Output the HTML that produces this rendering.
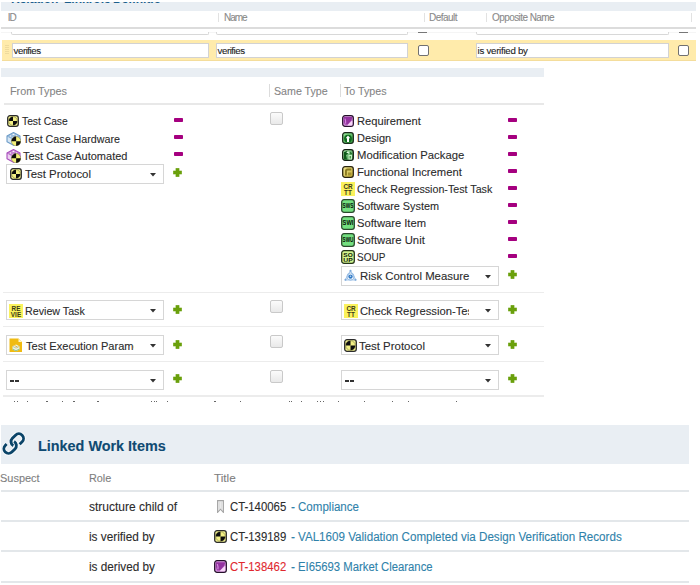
<!DOCTYPE html>
<html><head><meta charset="utf-8"><style>
html,body{margin:0;padding:0;}
body{width:700px;height:585px;overflow:hidden;position:relative;background:#fff;font-family:"Liberation Sans",sans-serif;}
.t{position:absolute;white-space:nowrap;-webkit-text-stroke:0.1px currentColor;}
svg{display:block;}
</style></head><body>
<div style="position:absolute;left:1px;top:2px;width:695px;height:9px;background:#e9eef3"></div>
<div style="position:absolute;left:0;top:1.5px;width:700px;height:1.9px;overflow:hidden">
<div class="t" style="left:11px;top:-8.1px;font-size:12px;line-height:12px;font-weight:bold;color:#1a5e8c">Relation</div>
<div class="t" style="left:64px;top:-8.1px;font-size:12px;line-height:12px;font-weight:bold;color:#1a5e8c">Linkrole</div>
<div class="t" style="left:113px;top:-8.1px;font-size:12px;line-height:12px;font-weight:bold;color:#1a5e8c">Definitio</div>
</div>
<div class="t" style="left:7.8px;top:12.93px;font-size:10px;line-height:10px;color:#8a8a8a;font-weight:normal;letter-spacing:-1.200px;">ID</div>
<div class="t" style="left:224px;top:12.93px;font-size:10px;line-height:10px;color:#8a8a8a;font-weight:normal;letter-spacing:-1.025px;">Name</div>
<div class="t" style="left:429px;top:12.93px;font-size:10px;line-height:10px;color:#8a8a8a;font-weight:normal;letter-spacing:-0.531px;">Default</div>
<div class="t" style="left:492px;top:12.93px;font-size:10px;line-height:10px;color:#8a8a8a;font-weight:normal;letter-spacing:-0.573px;">Opposite Name</div>
<div style="position:absolute;left:218px;top:13px;width:1px;height:9px;background:#e2e2e2"></div>
<div style="position:absolute;left:424px;top:13px;width:1px;height:9px;background:#e2e2e2"></div>
<div style="position:absolute;left:486px;top:13px;width:1px;height:9px;background:#e2e2e2"></div>
<div style="position:absolute;left:691px;top:13px;width:1px;height:9px;background:#e2e2e2"></div>
<div style="position:absolute;left:1px;top:27px;width:695px;height:2px;background:#dcdcdc"></div>
<div style="position:absolute;left:1px;top:32px;width:695px;height:1px;background:#f5f5f5"></div>
<div style="position:absolute;left:11px;top:32px;width:198px;height:3.4px;box-sizing:border-box;border:1px solid #d8d8d8;border-top:none;border-radius:0 0 2px 2px;background:#fff"></div>
<div style="position:absolute;left:216px;top:32px;width:192px;height:3.4px;box-sizing:border-box;border:1px solid #d8d8d8;border-top:none;border-radius:0 0 2px 2px;background:#fff"></div>
<div style="position:absolute;left:476px;top:32px;width:193px;height:3.4px;box-sizing:border-box;border:1px solid #d8d8d8;border-top:none;border-radius:0 0 2px 2px;background:#fff"></div>
<div style="position:absolute;left:418px;top:32.2px;width:9px;height:1.2px;background:#777"></div>
<div style="position:absolute;left:679px;top:32.2px;width:9px;height:1.2px;background:#777"></div>
<div style="position:absolute;left:2px;top:39.5px;width:694px;height:21.5px;background:#ffebab;box-shadow:inset 0 -1px 0 #f4dd9c"></div>
<svg style="position:absolute;left:5px;top:45px" width="4" height="10" viewBox="0 0 4 10"><rect x="0.5" y="0" width="1" height="1" fill="#dcc98f"/><rect x="0.5" y="2" width="1" height="1" fill="#dcc98f"/><rect x="0.5" y="4" width="1" height="1" fill="#dcc98f"/><rect x="0.5" y="6" width="1" height="1" fill="#dcc98f"/><rect x="0.5" y="8" width="1" height="1" fill="#dcc98f"/><rect x="2.5" y="0" width="1" height="1" fill="#dcc98f"/><rect x="2.5" y="2" width="1" height="1" fill="#dcc98f"/><rect x="2.5" y="4" width="1" height="1" fill="#dcc98f"/><rect x="2.5" y="6" width="1" height="1" fill="#dcc98f"/><rect x="2.5" y="8" width="1" height="1" fill="#dcc98f"/></svg>
<div style="position:absolute;left:12px;top:43px;width:197px;height:15px;box-sizing:border-box;border:1px solid #d2d2d2;background:#fff"></div>
<div class="t" style="left:13.6px;top:46.19px;font-size:9.7px;line-height:9.7px;color:#222;font-weight:normal;letter-spacing:-0.469px;">verifies</div>
<div style="position:absolute;left:216px;top:43px;width:192px;height:15px;box-sizing:border-box;border:1px solid #d2d2d2;background:#fff"></div>
<div class="t" style="left:217.6px;top:46.19px;font-size:9.7px;line-height:9.7px;color:#222;font-weight:normal;letter-spacing:-0.469px;">verifies</div>
<div style="position:absolute;left:476px;top:43px;width:193px;height:15px;box-sizing:border-box;border:1px solid #d2d2d2;background:#fff"></div>
<div class="t" style="left:477.6px;top:46.19px;font-size:9.7px;line-height:9.7px;color:#222;font-weight:normal;letter-spacing:-0.272px;">is verified by</div>
<div style="position:absolute;left:417.5px;top:44.5px;width:11px;height:11px;box-sizing:border-box;border:1.3px solid #707070;border-radius:2px;background:#fff"></div>
<div style="position:absolute;left:678px;top:44.5px;width:11px;height:11px;box-sizing:border-box;border:1.3px solid #707070;border-radius:2px;background:#fff"></div>
<div style="position:absolute;left:1px;top:68px;width:543px;height:8.6px;background:#e9eef3"></div>
<div class="t" style="left:9.7px;top:85.18px;font-size:11.6px;line-height:11.6px;color:#858585;font-weight:normal;transform:scaleX(0.9346);transform-origin:0 0;">From Types</div>
<div class="t" style="left:273.5px;top:85.18px;font-size:11.6px;line-height:11.6px;color:#858585;font-weight:normal;transform:scaleX(0.9191);transform-origin:0 0;">Same Type</div>
<div class="t" style="left:344.3px;top:85.18px;font-size:11.6px;line-height:11.6px;color:#858585;font-weight:normal;transform:scaleX(0.9203);transform-origin:0 0;">To Types</div>
<div style="position:absolute;left:269px;top:84px;width:1px;height:13px;background:#dcdcdc"></div>
<div style="position:absolute;left:340px;top:84px;width:1px;height:13px;background:#dcdcdc"></div>
<div style="position:absolute;left:4px;top:103px;width:540px;height:1.5px;background:#e8e8e8"></div>
<svg style="position:absolute;left:7px;top:115px" width="12" height="12" viewBox="0 0 12 12"><rect x="0.7" y="0.7" width="10.6" height="10.6" rx="2.3" fill="#f1ef8c" stroke="#2c2c2c" stroke-width="1.3"/><circle cx="6.0" cy="6.0" r="4.3" fill="#f3f084"/><path d="M6.0 6.0 L1.7000000000000002 6.0 A4.3 4.3 0 0 1 6.0 1.7000000000000002 Z" fill="#0c0c0c"/><path d="M6.0 6.0 L10.3 6.0 A4.3 4.3 0 0 1 6.0 10.3 Z" fill="#0c0c0c"/><circle cx="6.0" cy="6.0" r="4.3" fill="none" stroke="#3a3a20" stroke-width="0.35"/></svg>
<div class="t" style="left:22.3px;top:115.48px;font-size:11.6px;line-height:11.6px;color:#2b2b2b;font-weight:normal;transform:scaleX(0.8865);transform-origin:0 0;">Test Case</div>
<svg style="position:absolute;left:5.6px;top:130.8px" width="15" height="15" viewBox="0 0 15 15"><path d="M1 5 L7.5 1.6 L14 5 V10.8 L7.5 14.2 L1 10.8 Z" fill="#d6e6f4" stroke="#6d9cc8" stroke-width="1.1" stroke-linejoin="round"/><path d="M1 5 L7.5 8.4 L14 5 M7.5 8.4 V14" fill="none" stroke="#6d9cc8" stroke-width="0.7"/><ellipse cx="7.5" cy="3.4" rx="1.6" ry="1.05" fill="#fff" stroke="#6d9cc8" stroke-width="0.8"/><ellipse cx="4.5" cy="5" rx="1.6" ry="1.05" fill="#fff" stroke="#6d9cc8" stroke-width="0.8"/><ellipse cx="10.5" cy="5" rx="1.6" ry="1.05" fill="#fff" stroke="#6d9cc8" stroke-width="0.8"/><ellipse cx="7.5" cy="6.6" rx="1.6" ry="1.05" fill="#fff" stroke="#6d9cc8" stroke-width="0.8"/><circle cx="10.1" cy="10.2" r="4.7" fill="#f3f07a"/><path d="M10.1 10.2 L5.3999999999999995 10.2 A4.7 4.7 0 0 1 10.1 5.499999999999999 Z" fill="#0c0c0c"/><path d="M10.1 10.2 L14.8 10.2 A4.7 4.7 0 0 1 10.1 14.899999999999999 Z" fill="#0c0c0c"/><circle cx="10.1" cy="10.2" r="4.7" fill="none" stroke="#3a3a20" stroke-width="0.35"/></svg>
<div class="t" style="left:22.7px;top:132.98px;font-size:11.6px;line-height:11.6px;color:#2b2b2b;font-weight:normal;transform:scaleX(0.9236);transform-origin:0 0;">Test Case Hardware</div>
<svg style="position:absolute;left:5.6px;top:147.6px" width="15" height="15" viewBox="0 0 15 15"><path d="M1 5 L7.5 1.6 L14 5 V10.8 L7.5 14.2 L1 10.8 Z" fill="#ecd2f0" stroke="#a84cbc" stroke-width="1.1" stroke-linejoin="round"/><path d="M1 5 L7.5 8.4 L14 5 M7.5 8.4 V14" fill="none" stroke="#a84cbc" stroke-width="0.7"/><ellipse cx="7.5" cy="3.4" rx="1.6" ry="1.05" fill="#fff" stroke="#a84cbc" stroke-width="0.8"/><ellipse cx="4.5" cy="5" rx="1.6" ry="1.05" fill="#fff" stroke="#a84cbc" stroke-width="0.8"/><ellipse cx="10.5" cy="5" rx="1.6" ry="1.05" fill="#fff" stroke="#a84cbc" stroke-width="0.8"/><ellipse cx="7.5" cy="6.6" rx="1.6" ry="1.05" fill="#fff" stroke="#a84cbc" stroke-width="0.8"/><circle cx="10.1" cy="10.2" r="4.7" fill="#f3f07a"/><path d="M10.1 10.2 L5.3999999999999995 10.2 A4.7 4.7 0 0 1 10.1 5.499999999999999 Z" fill="#0c0c0c"/><path d="M10.1 10.2 L14.8 10.2 A4.7 4.7 0 0 1 10.1 14.899999999999999 Z" fill="#0c0c0c"/><circle cx="10.1" cy="10.2" r="4.7" fill="none" stroke="#3a3a20" stroke-width="0.35"/></svg>
<div class="t" style="left:22.7px;top:149.88px;font-size:11.6px;line-height:11.6px;color:#2b2b2b;font-weight:normal;transform:scaleX(0.9473);transform-origin:0 0;">Test Case Automated</div>
<div style="position:absolute;left:173.5px;top:117.7px;width:9.2px;height:4px;background:#a5007f;border-radius:0.8px"></div>
<div style="position:absolute;left:173.5px;top:134.7px;width:9.2px;height:4px;background:#a5007f;border-radius:0.8px"></div>
<div style="position:absolute;left:173.5px;top:151.7px;width:9.2px;height:4px;background:#a5007f;border-radius:0.8px"></div>
<div style="position:absolute;left:6px;top:163.5px;width:158px;height:20px;box-sizing:border-box;border:1px solid #d6d6d6;background:#fff"></div>
<svg style="position:absolute;left:150px;top:172.5px" width="6" height="4" viewBox="0 0 6 4"><path d="M0 0 H6 L3 3.5 Z" fill="#333"/></svg>
<svg style="position:absolute;left:9.5px;top:168px" width="12" height="12" viewBox="0 0 12 12"><rect x="0.7" y="0.7" width="10.6" height="10.6" rx="2.3" fill="#f1ef8c" stroke="#2c2c2c" stroke-width="1.3"/><circle cx="6.0" cy="6.0" r="4.3" fill="#f3f084"/><path d="M6.0 6.0 L1.7000000000000002 6.0 A4.3 4.3 0 0 1 6.0 1.7000000000000002 Z" fill="#0c0c0c"/><path d="M6.0 6.0 L10.3 6.0 A4.3 4.3 0 0 1 6.0 10.3 Z" fill="#0c0c0c"/><circle cx="6.0" cy="6.0" r="4.3" fill="none" stroke="#3a3a20" stroke-width="0.35"/></svg>
<div class="t" style="left:25px;top:168.38px;font-size:11.6px;line-height:11.6px;color:#2b2b2b;font-weight:normal;transform:scaleX(0.9849);transform-origin:0 0;">Test Protocol</div>
<svg style="position:absolute;left:173.1px;top:167.6px" width="9" height="9" viewBox="0 0 9 9"><path d="M2.9 0.3 H6.1 V2.9 H8.7 V6.1 H6.1 V8.7 H2.9 V6.1 H0.3 V2.9 H2.9 Z" fill="#6aa00c" stroke="#6aa00c" stroke-width="0.5" stroke-linejoin="round"/></svg>
<div style="position:absolute;left:270px;top:112px;width:13px;height:13px;box-sizing:border-box;border:1px solid #c9c9c9;border-radius:2px;background:linear-gradient(#fbfbfb,#e9e9e9)"></div>
<svg style="position:absolute;left:342px;top:115.0px" width="12" height="12" viewBox="0 0 12 12"><rect x="0.7" y="0.7" width="10.6" height="10.6" rx="2.3" fill="#de9ce6" stroke="#24102a" stroke-width="1.3"/><g transform="scale(1.0)"><path d="M1.8 2 H10.4 L9.6 5.2 L5.6 9.8 L2.6 9.6 L1.8 6 Z" fill="#93339f"/><path d="M3 3.6 Q4 6 3.6 8.6" stroke="#d58ae0" stroke-width="1.1" fill="none"/><path d="M5.2 10.4 L10.4 5.4 L10.4 10.4 Z" fill="#f7d6f7"/></g></svg>
<div class="t" style="left:357px;top:115.48px;font-size:11.6px;line-height:11.6px;color:#2b2b2b;font-weight:normal;transform:scaleX(0.9612);transform-origin:0 0;">Requirement</div>
<div style="position:absolute;left:508px;top:117.5px;width:9.2px;height:4px;background:#a5007f;border-radius:0.8px"></div>
<svg style="position:absolute;left:342px;top:132.0px" width="12" height="12" viewBox="0 0 12 12"><defs><linearGradient id="g56" x1="0" y1="0" x2="1" y2="1"><stop offset="0" stop-color="#9ee8a0"/><stop offset="1" stop-color="#2e9a3a"/></linearGradient></defs><rect x="0.7" y="0.7" width="10.6" height="10.6" rx="2.3" fill="url(#g56)" stroke="#1a2a1a" stroke-width="1.3"/><circle cx="6" cy="6.6" r="3.9" fill="#0f6a1c"/><path d="M6 3.6 L3.7 6.2 H5 V10 H7 V6.2 H8.3 Z" fill="#fff"/></svg>
<div class="t" style="left:357px;top:132.48px;font-size:11.6px;line-height:11.6px;color:#2b2b2b;font-weight:normal;transform:scaleX(0.9477);transform-origin:0 0;">Design</div>
<div style="position:absolute;left:508px;top:134.5px;width:9.2px;height:4px;background:#a5007f;border-radius:0.8px"></div>
<svg style="position:absolute;left:342px;top:149.0px" width="12" height="12" viewBox="0 0 12 12"><defs><linearGradient id="g59" x1="0" y1="0" x2="1" y2="1"><stop offset="0" stop-color="#b8f0b8"/><stop offset="1" stop-color="#2f8a3a"/></linearGradient></defs><rect x="0.7" y="0.7" width="10.6" height="10.6" rx="2.3" fill="url(#g59)" stroke="#142014" stroke-width="1.3"/><path d="M2 10.5 L2 3 L5 2 L6 5 L4 6 L5 10.5 Z" fill="#0e5a1a"/><path d="M4 3.5 L6.5 2.5 L7 4.5 Z" fill="#e8ffe8"/><path d="M6.5 6 H10 V10.5 H6.5 Z" fill="#c8f0c8"/><path d="M7.5 7 H9 V9.5 H7.5 Z" fill="#4aa04a"/><path d="M8 2.5 L10 4.5 L8.5 5.5 Z" fill="#0e5a1a"/></svg>
<div class="t" style="left:357px;top:149.48px;font-size:11.6px;line-height:11.6px;color:#2b2b2b;font-weight:normal;transform:scaleX(0.9728);transform-origin:0 0;">Modification Package</div>
<div style="position:absolute;left:508px;top:151.5px;width:9.2px;height:4px;background:#a5007f;border-radius:0.8px"></div>
<svg style="position:absolute;left:342px;top:166.0px" width="12" height="12" viewBox="0 0 12 12"><defs><linearGradient id="g62" x1="0" y1="0" x2="1" y2="1"><stop offset="0" stop-color="#f4ea98"/><stop offset="1" stop-color="#c2ac30"/></linearGradient></defs><rect x="0.7" y="0.7" width="10.6" height="10.6" rx="2.3" fill="url(#g62)" stroke="#2a2410" stroke-width="1.3"/><path d="M3 9.5 V5 A2.5 2.5 0 0 1 5.5 2.5 H9.3 V4.5 H5.6 A0.8 0.8 0 0 0 4.9 5.3 V9.5 Z" fill="#8a7a20"/><path d="M6 6.5 H9.5 V9.5 H6 Z" fill="#a49230"/></svg>
<div class="t" style="left:357px;top:166.48px;font-size:11.6px;line-height:11.6px;color:#2b2b2b;font-weight:normal;transform:scaleX(0.9680);transform-origin:0 0;">Functional Increment</div>
<div style="position:absolute;left:508px;top:168.5px;width:9.2px;height:4px;background:#a5007f;border-radius:0.8px"></div>
<svg style="position:absolute;left:341px;top:182.2px" width="14" height="14" viewBox="0 0 14 14"><rect width="14" height="14" fill="#faf25c"/><text x="7.0" y="6.7" font-family="Liberation Sans" font-size="6.4" text-anchor="middle" fill="#3a3a18" font-weight="bold">CR</text><text x="7.0" y="13" font-family="Liberation Sans" font-size="6.4" text-anchor="middle" fill="#3a3a18" font-weight="bold">TT</text></svg>
<div class="t" style="left:357px;top:183.48px;font-size:11.6px;line-height:11.6px;color:#2b2b2b;font-weight:normal;transform:scaleX(0.9223);transform-origin:0 0;">Check Regression-Test Task</div>
<div style="position:absolute;left:508px;top:185.5px;width:9.2px;height:4px;background:#a5007f;border-radius:0.8px"></div>
<svg style="position:absolute;left:341px;top:199.4px" width="14" height="14" viewBox="0 0 14 14"><rect x="0.7" y="0.7" width="12.6" height="12.6" rx="2.3" fill="#74e080" stroke="#2a4a2c" stroke-width="1.3"/><text x="1.6" y="9.4" font-family="Liberation Sans" font-size="6.3" font-weight="bold" textLength="10.8" lengthAdjust="spacingAndGlyphs" fill="#061006">SWS</text></svg>
<div class="t" style="left:357px;top:200.48px;font-size:11.6px;line-height:11.6px;color:#2b2b2b;font-weight:normal;transform:scaleX(0.9358);transform-origin:0 0;">Software System</div>
<div style="position:absolute;left:508px;top:202.5px;width:9.2px;height:4px;background:#a5007f;border-radius:0.8px"></div>
<svg style="position:absolute;left:341px;top:216.4px" width="14" height="14" viewBox="0 0 14 14"><rect x="0.7" y="0.7" width="12.6" height="12.6" rx="2.3" fill="#74e080" stroke="#2a4a2c" stroke-width="1.3"/><text x="1.6" y="9.4" font-family="Liberation Sans" font-size="6.3" font-weight="bold" textLength="10.8" lengthAdjust="spacingAndGlyphs" fill="#061006">SWI</text></svg>
<div class="t" style="left:357px;top:217.48px;font-size:11.6px;line-height:11.6px;color:#2b2b2b;font-weight:normal;transform:scaleX(0.9647);transform-origin:0 0;">Software Item</div>
<div style="position:absolute;left:508px;top:219.5px;width:9.2px;height:4px;background:#a5007f;border-radius:0.8px"></div>
<svg style="position:absolute;left:341px;top:233.4px" width="14" height="14" viewBox="0 0 14 14"><rect x="0.7" y="0.7" width="12.6" height="12.6" rx="2.3" fill="#74e080" stroke="#2a4a2c" stroke-width="1.3"/><text x="1.6" y="9.4" font-family="Liberation Sans" font-size="6.3" font-weight="bold" textLength="10.8" lengthAdjust="spacingAndGlyphs" fill="#061006">SWU</text></svg>
<div class="t" style="left:357px;top:234.48px;font-size:11.6px;line-height:11.6px;color:#2b2b2b;font-weight:normal;transform:scaleX(0.9743);transform-origin:0 0;">Software Unit</div>
<div style="position:absolute;left:508px;top:236.5px;width:9.2px;height:4px;background:#a5007f;border-radius:0.8px"></div>
<svg style="position:absolute;left:341px;top:249.8px" width="14" height="14" viewBox="0 0 14 14"><rect x="0.7" y="0.7" width="12.6" height="12.6" rx="2.3" fill="#d2f48e" stroke="#26361a" stroke-width="1.3"/><text x="2.3" y="6.6" font-family="Liberation Sans" font-size="5.8" font-weight="bold" textLength="9.4" lengthAdjust="spacingAndGlyphs" fill="#101808">SO</text><text x="2.3" y="12" font-family="Liberation Sans" font-size="5.8" font-weight="bold" textLength="9.4" lengthAdjust="spacingAndGlyphs" fill="#101808">UP</text></svg>
<div class="t" style="left:357px;top:251.48px;font-size:11.6px;line-height:11.6px;color:#2b2b2b;font-weight:normal;transform:scaleX(0.8613);transform-origin:0 0;">SOUP</div>
<div style="position:absolute;left:508px;top:253.5px;width:9.2px;height:4px;background:#a5007f;border-radius:0.8px"></div>
<div style="position:absolute;left:341px;top:265.5px;width:158px;height:20px;box-sizing:border-box;border:1px solid #d6d6d6;background:#fff"></div>
<svg style="position:absolute;left:485px;top:274.5px" width="6" height="4" viewBox="0 0 6 4"><path d="M0 0 H6 L3 3.5 Z" fill="#333"/></svg>
<svg style="position:absolute;left:344px;top:269px" width="13" height="13" viewBox="0 0 13 13"><path d="M6.5 1.8 L11.8 11 H1.2 Z" fill="none" stroke="#a8c8ea" stroke-width="1.2" stroke-linejoin="round"/><circle cx="6.5" cy="7.6" r="3.6" fill="none" stroke="#9cc0e6" stroke-width="1"/><circle cx="6.5" cy="7.6" r="2.2" fill="#2f78c4"/><circle cx="6.5" cy="7.3" r="0.8" fill="#bcd8f4"/><circle cx="6.5" cy="1.8" r="1" fill="#7aa8d8"/><circle cx="1.5" cy="10.8" r="1" fill="#7aa8d8"/><circle cx="11.5" cy="10.8" r="1" fill="#7aa8d8"/></svg>
<div class="t" style="left:359.6px;top:269.78px;font-size:11.6px;line-height:11.6px;color:#2b2b2b;font-weight:normal;transform:scaleX(0.9815);transform-origin:0 0;">Risk Control Measure</div>
<svg style="position:absolute;left:507.6px;top:269.6px" width="9" height="9" viewBox="0 0 9 9"><path d="M2.9 0.3 H6.1 V2.9 H8.7 V6.1 H6.1 V8.7 H2.9 V6.1 H0.3 V2.9 H2.9 Z" fill="#6aa00c" stroke="#6aa00c" stroke-width="0.5" stroke-linejoin="round"/></svg>
<div style="position:absolute;left:3px;top:291.5px;width:541px;height:1.2px;background:#ececec"></div>
<div style="position:absolute;left:3px;top:326.3px;width:541px;height:1.2px;background:#ececec"></div>
<div style="position:absolute;left:3px;top:360.8px;width:541px;height:1.2px;background:#ececec"></div>
<div style="position:absolute;left:3px;top:395.4px;width:541px;height:1.2px;background:#ececec"></div>
<div style="position:absolute;left:6px;top:300.3px;width:158px;height:20px;box-sizing:border-box;border:1px solid #d6d6d6;background:#fff"></div>
<svg style="position:absolute;left:150px;top:309.3px" width="6" height="4" viewBox="0 0 6 4"><path d="M0 0 H6 L3 3.5 Z" fill="#333"/></svg>
<svg style="position:absolute;left:173.1px;top:304.90000000000003px" width="9" height="9" viewBox="0 0 9 9"><path d="M2.9 0.3 H6.1 V2.9 H8.7 V6.1 H6.1 V8.7 H2.9 V6.1 H0.3 V2.9 H2.9 Z" fill="#6aa00c" stroke="#6aa00c" stroke-width="0.5" stroke-linejoin="round"/></svg>
<div style="position:absolute;left:270px;top:300.3px;width:13px;height:13px;box-sizing:border-box;border:1px solid #c9c9c9;border-radius:2px;background:linear-gradient(#fbfbfb,#e9e9e9)"></div>
<div style="position:absolute;left:341px;top:300.3px;width:158px;height:20px;box-sizing:border-box;border:1px solid #d6d6d6;background:#fff"></div>
<svg style="position:absolute;left:485px;top:309.3px" width="6" height="4" viewBox="0 0 6 4"><path d="M0 0 H6 L3 3.5 Z" fill="#333"/></svg>
<svg style="position:absolute;left:507.6px;top:304.90000000000003px" width="9" height="9" viewBox="0 0 9 9"><path d="M2.9 0.3 H6.1 V2.9 H8.7 V6.1 H6.1 V8.7 H2.9 V6.1 H0.3 V2.9 H2.9 Z" fill="#6aa00c" stroke="#6aa00c" stroke-width="0.5" stroke-linejoin="round"/></svg>
<div style="position:absolute;left:6px;top:335px;width:158px;height:20px;box-sizing:border-box;border:1px solid #d6d6d6;background:#fff"></div>
<svg style="position:absolute;left:150px;top:344px" width="6" height="4" viewBox="0 0 6 4"><path d="M0 0 H6 L3 3.5 Z" fill="#333"/></svg>
<svg style="position:absolute;left:173.1px;top:339.6px" width="9" height="9" viewBox="0 0 9 9"><path d="M2.9 0.3 H6.1 V2.9 H8.7 V6.1 H6.1 V8.7 H2.9 V6.1 H0.3 V2.9 H2.9 Z" fill="#6aa00c" stroke="#6aa00c" stroke-width="0.5" stroke-linejoin="round"/></svg>
<div style="position:absolute;left:270px;top:335px;width:13px;height:13px;box-sizing:border-box;border:1px solid #c9c9c9;border-radius:2px;background:linear-gradient(#fbfbfb,#e9e9e9)"></div>
<div style="position:absolute;left:341px;top:335px;width:158px;height:20px;box-sizing:border-box;border:1px solid #d6d6d6;background:#fff"></div>
<svg style="position:absolute;left:485px;top:344px" width="6" height="4" viewBox="0 0 6 4"><path d="M0 0 H6 L3 3.5 Z" fill="#333"/></svg>
<svg style="position:absolute;left:507.6px;top:339.6px" width="9" height="9" viewBox="0 0 9 9"><path d="M2.9 0.3 H6.1 V2.9 H8.7 V6.1 H6.1 V8.7 H2.9 V6.1 H0.3 V2.9 H2.9 Z" fill="#6aa00c" stroke="#6aa00c" stroke-width="0.5" stroke-linejoin="round"/></svg>
<div style="position:absolute;left:6px;top:369.5px;width:158px;height:20px;box-sizing:border-box;border:1px solid #d6d6d6;background:#fff"></div>
<svg style="position:absolute;left:150px;top:378.5px" width="6" height="4" viewBox="0 0 6 4"><path d="M0 0 H6 L3 3.5 Z" fill="#333"/></svg>
<svg style="position:absolute;left:173.1px;top:374.1px" width="9" height="9" viewBox="0 0 9 9"><path d="M2.9 0.3 H6.1 V2.9 H8.7 V6.1 H6.1 V8.7 H2.9 V6.1 H0.3 V2.9 H2.9 Z" fill="#6aa00c" stroke="#6aa00c" stroke-width="0.5" stroke-linejoin="round"/></svg>
<div style="position:absolute;left:270px;top:369.5px;width:13px;height:13px;box-sizing:border-box;border:1px solid #c9c9c9;border-radius:2px;background:linear-gradient(#fbfbfb,#e9e9e9)"></div>
<div style="position:absolute;left:341px;top:369.5px;width:158px;height:20px;box-sizing:border-box;border:1px solid #d6d6d6;background:#fff"></div>
<svg style="position:absolute;left:485px;top:378.5px" width="6" height="4" viewBox="0 0 6 4"><path d="M0 0 H6 L3 3.5 Z" fill="#333"/></svg>
<svg style="position:absolute;left:507.6px;top:374.1px" width="9" height="9" viewBox="0 0 9 9"><path d="M2.9 0.3 H6.1 V2.9 H8.7 V6.1 H6.1 V8.7 H2.9 V6.1 H0.3 V2.9 H2.9 Z" fill="#6aa00c" stroke="#6aa00c" stroke-width="0.5" stroke-linejoin="round"/></svg>
<svg style="position:absolute;left:8.6px;top:303.8px" width="14" height="14" viewBox="0 0 14 14"><rect width="14" height="14" fill="#faf25c"/><text x="7.0" y="6.7" font-family="Liberation Sans" font-size="6.4" text-anchor="middle" fill="#3a3a18" font-weight="bold">RE</text><text x="7.0" y="13" font-family="Liberation Sans" font-size="6.4" text-anchor="middle" fill="#3a3a18" font-weight="bold">VIE</text></svg>
<div class="t" style="left:24.8px;top:305.18px;font-size:11.6px;line-height:11.6px;color:#2b2b2b;font-weight:normal;transform:scaleX(0.9220);transform-origin:0 0;">Review Task</div>
<svg style="position:absolute;left:343.6px;top:303.8px" width="14" height="14" viewBox="0 0 14 14"><rect width="14" height="14" fill="#faf25c"/><text x="7.0" y="6.7" font-family="Liberation Sans" font-size="6.4" text-anchor="middle" fill="#3a3a18" font-weight="bold">CR</text><text x="7.0" y="13" font-family="Liberation Sans" font-size="6.4" text-anchor="middle" fill="#3a3a18" font-weight="bold">TT</text></svg>
<div style="position:absolute;left:357px;top:300px;width:112px;height:20px;overflow:hidden">
<div class="t" style="left:2.5px;top:5.18px;font-size:11.6px;line-height:11.6px;color:#2b2b2b;font-weight:normal;transform:scaleX(0.9700);transform-origin:0 0;">Check Regression-Test Task</div>
</div>
<svg style="position:absolute;left:9px;top:337.8px" width="14" height="14" viewBox="0 0 14 14"><path d="M0.5 0.5 H9.5 L13 4 V14 H0.5 Z" fill="#f0bb12"/><path d="M9.5 0.5 V4 H13 Z" fill="#fff6c8"/><path d="M3.5 8.3 L7 6.5 L10.5 8.3 V11.5 L7 13.3 L3.5 11.5 Z" fill="#eef2e2"/><path d="M3.5 8.3 L7 10.1 L10.5 8.3" fill="none" stroke="#a8b488" stroke-width="0.7"/><path d="M3.5 10.5 L7 12.3 L10.5 10.5 V11.5 L7 13.3 L3.5 11.5 Z" fill="#8fc28a"/><path d="M5.5 7.5 L8.5 9" stroke="#e8b020" stroke-width="0.9"/></svg>
<div style="position:absolute;left:24px;top:335px;width:109.6px;height:20px;overflow:hidden">
<div class="t" style="left:1.5px;top:5.18px;font-size:11.6px;line-height:11.6px;color:#2b2b2b;font-weight:normal;transform:scaleX(0.9537);transform-origin:0 0;">Test Execution Parameter</div>
</div>
<svg style="position:absolute;left:344.2px;top:338.6px" width="13" height="13" viewBox="0 0 13 13"><rect x="0.7" y="0.7" width="11.6" height="11.6" rx="2.3" fill="#f1ef8c" stroke="#2c2c2c" stroke-width="1.3"/><circle cx="6.5" cy="6.5" r="4.8" fill="#f3f084"/><path d="M6.5 6.5 L1.7000000000000002 6.5 A4.8 4.8 0 0 1 6.5 1.7000000000000002 Z" fill="#0c0c0c"/><path d="M6.5 6.5 L11.3 6.5 A4.8 4.8 0 0 1 6.5 11.3 Z" fill="#0c0c0c"/><circle cx="6.5" cy="6.5" r="4.8" fill="none" stroke="#3a3a20" stroke-width="0.35"/></svg>
<div class="t" style="left:359px;top:340.18px;font-size:11.6px;line-height:11.6px;color:#2b2b2b;font-weight:normal;transform:scaleX(0.9849);transform-origin:0 0;">Test Protocol</div>
<div style="position:absolute;left:9.8px;top:380.2px;width:3.8px;height:1.8px;background:#333"></div>
<div style="position:absolute;left:14.9px;top:380.2px;width:4px;height:1.8px;background:#333"></div>
<div style="position:absolute;left:344.8px;top:380.2px;width:3.8px;height:1.8px;background:#333"></div>
<div style="position:absolute;left:349.9px;top:380.2px;width:4px;height:1.8px;background:#333"></div>
<div style="position:absolute;left:13.8px;top:400.5px;width:1.2px;height:1.1px;background:#666"></div>
<div style="position:absolute;left:16.5px;top:400.5px;width:1.2px;height:1.1px;background:#666"></div>
<div style="position:absolute;left:26.7px;top:400.5px;width:1.2px;height:1.1px;background:#666"></div>
<div style="position:absolute;left:46.4px;top:400.5px;width:1.2px;height:1.1px;background:#666"></div>
<div style="position:absolute;left:62px;top:400.5px;width:1.2px;height:1.1px;background:#666"></div>
<div style="position:absolute;left:72.7px;top:400.5px;width:2.7px;height:1.1px;background:#666"></div>
<div style="position:absolute;left:97.4px;top:400.5px;width:1.2px;height:1.1px;background:#666"></div>
<div style="position:absolute;left:151px;top:400.5px;width:1.2px;height:1.1px;background:#666"></div>
<div style="position:absolute;left:153.5px;top:400.5px;width:1.2px;height:1.1px;background:#666"></div>
<div style="position:absolute;left:156px;top:400.5px;width:1.2px;height:1.1px;background:#666"></div>
<div style="position:absolute;left:167px;top:400.5px;width:1.2px;height:1.1px;background:#666"></div>
<div style="position:absolute;left:214px;top:400.5px;width:1.6px;height:1.1px;background:#666"></div>
<div style="position:absolute;left:239.7px;top:400.5px;width:1.2px;height:1.1px;background:#666"></div>
<div style="position:absolute;left:288.9px;top:400.5px;width:1.2px;height:1.1px;background:#666"></div>
<div style="position:absolute;left:291px;top:400.5px;width:1.2px;height:1.1px;background:#666"></div>
<div style="position:absolute;left:300.6px;top:400.5px;width:1.2px;height:1.1px;background:#666"></div>
<div style="position:absolute;left:317px;top:400.5px;width:1.2px;height:1.1px;background:#666"></div>
<div style="position:absolute;left:320px;top:400.5px;width:1.2px;height:1.1px;background:#666"></div>
<div style="position:absolute;left:323px;top:400.5px;width:1.2px;height:1.1px;background:#666"></div>
<div style="position:absolute;left:337.6px;top:400.5px;width:1.2px;height:1.1px;background:#666"></div>
<div style="position:absolute;left:363.5px;top:400.5px;width:1.2px;height:1.1px;background:#666"></div>
<div style="position:absolute;left:391.8px;top:400.5px;width:1.2px;height:1.1px;background:#666"></div>
<div style="position:absolute;left:407.5px;top:400.5px;width:1.2px;height:1.1px;background:#666"></div>
<div style="position:absolute;left:455.5px;top:400.5px;width:1.2px;height:1.1px;background:#666"></div>
<div style="position:absolute;left:1px;top:424.5px;width:688px;height:39.5px;background:#e9eef3"></div>
<svg style="position:absolute;left:0px;top:430px" width="28" height="28" viewBox="0 0 28 28"><g transform="translate(13.7 13.6) rotate(-45) scale(1.17)" fill="none"><g stroke="#f8fafc" stroke-width="3.9"><path d="M-4.6 -4 H-6.2 A4 4 0 0 0 -6.2 4 H-2.4 A4 4 0 0 0 1.47 -1"/><path d="M3.2 4 H6.2 A4 4 0 0 0 6.2 -4 H2.4 A4 4 0 0 0 -1.47 1"/></g><g stroke="#0b4468" stroke-width="2.45"><path d="M-4.6 -4 H-6.2 A4 4 0 0 0 -6.2 4 H-2.4 A4 4 0 0 0 1.47 -1"/><path d="M3.2 4 H6.2 A4 4 0 0 0 6.2 -4 H2.4 A4 4 0 0 0 -1.47 1"/></g></g></svg>
<div class="t" style="left:38px;top:439.15px;font-size:14px;line-height:14px;color:#0f4a72;font-weight:bold;transform:scaleX(1.0280);transform-origin:0 0;">Linked Work Items</div>
<div class="t" style="left:-0.2px;top:473.25px;font-size:11.4px;line-height:11.4px;color:#7e7e7e;font-weight:normal;transform:scaleX(0.9622);transform-origin:0 0;">Suspect</div>
<div class="t" style="left:88.6px;top:473.25px;font-size:11.4px;line-height:11.4px;color:#7e7e7e;font-weight:normal;transform:scaleX(0.9519);transform-origin:0 0;">Role</div>
<div class="t" style="left:213.7px;top:473.25px;font-size:11.4px;line-height:11.4px;color:#7e7e7e;font-weight:normal;transform:scaleX(1.0286);transform-origin:0 0;">Title</div>
<div style="position:absolute;left:1px;top:490.2px;width:688px;height:1.5px;background:#e3e7ea"></div>
<div style="position:absolute;left:1px;top:520.4px;width:688px;height:1.5px;background:#e3e7ea"></div>
<div style="position:absolute;left:1px;top:550.4px;width:688px;height:1.5px;background:#e3e7ea"></div>
<div style="position:absolute;left:1px;top:581px;width:688px;height:1.5px;background:#e3e7ea"></div>
<div class="t" style="left:88.6px;top:501.14px;font-size:12px;line-height:12px;color:#2b2b2b;font-weight:normal;transform:scaleX(0.9996);transform-origin:0 0;">structure child of</div>
<svg style="position:absolute;left:217px;top:500px" width="7" height="13" viewBox="0 0 7 13"><path d="M0.6 0.6 H6.4 V12.4 L3.5 9.2 L0.6 12.4 Z" fill="#ececec" stroke="#a4a4a4" stroke-width="1.1"/><path d="M2.6 1.5 V9 M4.4 1.5 V9" stroke="#d4d4d4" stroke-width="0.6"/></svg>
<div class="t" style="left:230px;top:501.14px;font-size:12px;line-height:12px;color:#2b2b2b;font-weight:normal;transform:scaleX(0.9466);transform-origin:0 0;">CT-140065</div>
<div class="t" style="left:291px;top:501.14px;font-size:12px;line-height:12px;color:#2f82aa;font-weight:normal;">-</div>
<div class="t" style="left:298px;top:501.14px;font-size:12px;line-height:12px;color:#2f82aa;font-weight:normal;transform:scaleX(0.9627);transform-origin:0 0;">Compliance</div>
<div class="t" style="left:88.6px;top:531.44px;font-size:12px;line-height:12px;color:#2b2b2b;font-weight:normal;transform:scaleX(0.9836);transform-origin:0 0;">is verified by</div>
<svg style="position:absolute;left:214.2px;top:530px" width="13" height="13" viewBox="0 0 13 13"><rect x="0.7" y="0.7" width="11.6" height="11.6" rx="2.3" fill="#f1ef8c" stroke="#2c2c2c" stroke-width="1.3"/><circle cx="6.5" cy="6.5" r="4.8" fill="#f3f084"/><path d="M6.5 6.5 L1.7000000000000002 6.5 A4.8 4.8 0 0 1 6.5 1.7000000000000002 Z" fill="#0c0c0c"/><path d="M6.5 6.5 L11.3 6.5 A4.8 4.8 0 0 1 6.5 11.3 Z" fill="#0c0c0c"/><circle cx="6.5" cy="6.5" r="4.8" fill="none" stroke="#3a3a20" stroke-width="0.35"/></svg>
<div class="t" style="left:230px;top:531.44px;font-size:12px;line-height:12px;color:#2b2b2b;font-weight:normal;transform:scaleX(0.9466);transform-origin:0 0;">CT-139189</div>
<div class="t" style="left:291px;top:531.44px;font-size:12px;line-height:12px;color:#2f82aa;font-weight:normal;">-</div>
<div class="t" style="left:298px;top:531.44px;font-size:12px;line-height:12px;color:#2f82aa;font-weight:normal;transform:scaleX(0.9680);transform-origin:0 0;">VAL1609 Validation Completed via Design Verification Records</div>
<div class="t" style="left:88.6px;top:561.14px;font-size:12px;line-height:12px;color:#2b2b2b;font-weight:normal;transform:scaleX(0.9782);transform-origin:0 0;">is derived by</div>
<svg style="position:absolute;left:214.2px;top:560px" width="13" height="13" viewBox="0 0 13 13"><rect x="0.7" y="0.7" width="11.6" height="11.6" rx="2.3" fill="#de9ce6" stroke="#24102a" stroke-width="1.3"/><g transform="scale(1.0833333333333333)"><path d="M1.8 2 H10.4 L9.6 5.2 L5.6 9.8 L2.6 9.6 L1.8 6 Z" fill="#93339f"/><path d="M3 3.6 Q4 6 3.6 8.6" stroke="#d58ae0" stroke-width="1.1" fill="none"/><path d="M5.2 10.4 L10.4 5.4 L10.4 10.4 Z" fill="#f7d6f7"/></g></svg>
<div class="t" style="left:230px;top:561.14px;font-size:12px;line-height:12px;color:#e0282e;font-weight:normal;transform:scaleX(0.9466);transform-origin:0 0;">CT-138462</div>
<div class="t" style="left:291px;top:561.14px;font-size:12px;line-height:12px;color:#2f82aa;font-weight:normal;">-</div>
<div class="t" style="left:298px;top:561.14px;font-size:12px;line-height:12px;color:#2f82aa;font-weight:normal;transform:scaleX(0.9429);transform-origin:0 0;">EI65693 Market Clearance</div>
</body></html>
